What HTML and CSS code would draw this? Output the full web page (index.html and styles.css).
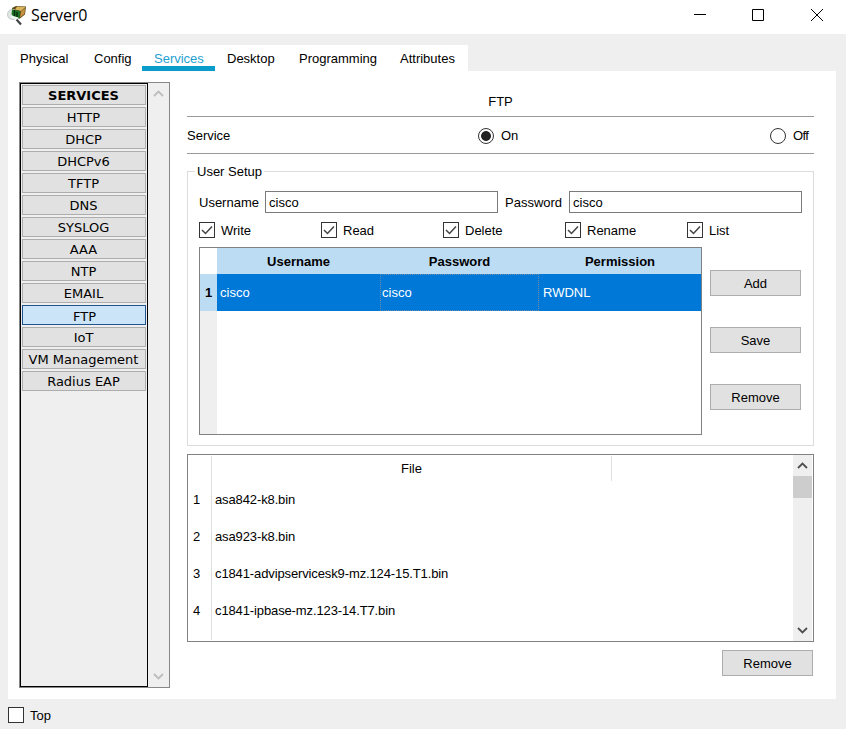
FILE: index.html
```html
<!DOCTYPE html>
<html lang="en">
<head>
<meta charset="utf-8">
<title>Server0</title>
<link rel="stylesheet" href="styles.css">
</head>
<body>
<header class="titlebar">
  <svg class="app-icon" width="20" height="22" viewBox="0 0 20 22">
    <path d="M5 3l4-2 10 .5-1 8-5 4-7-1z" fill="#5b4718"/>
    <path d="M10 1.500l8.500.5-4.500 4-6-1.500z" fill="#d9b45c"/>
    <path d="M14 6.500l4-3.500-.5 6L13 12.500z" fill="#c49340"/>
    <circle cx="5.500" cy="9.500" r="5" fill="#dfe5e2" stroke="#c3c9c6"/>
    <path d="M5 4.500l8 1.500-.5 7.500-5-1-3-3z" fill="#1d7426"/>
    <path d="M7.500 5v6M10 7v5" stroke="#082c0b" stroke-width="1.400"/>
    <path d="M4 11.500l7 2" stroke="#f3f7f5" stroke-width="2"/>
    <path d="M9.500 14.500l4.500 5" stroke="#444" stroke-width="2.200"/>
  </svg>
  <h1>Server0</h1>
  <svg class="controls" width="130" height="14" viewBox="0 0 130 14" fill="none" stroke="#000">
    <path d="M0 6.500h12M58.500 1.500h11v11h-11zM117 1l12 12M129 1l-12 12"/>
  </svg>
</header>
<nav class="tabs">
  <a class="tab t1">Physical</a><a class="tab t2">Config</a><a class="tab t3 active">Services</a><a class="tab t4">Desktop</a><a class="tab t5">Programming</a><a class="tab t6">Attributes</a>
</nav>
<main class="panel">
  <aside class="sidebar">
    <div class="services">
      <div class="service heading">SERVICES</div>
      <div class="service">HTTP</div>
      <div class="service">DHCP</div>
      <div class="service">DHCPv6</div>
      <div class="service">TFTP</div>
      <div class="service">DNS</div>
      <div class="service">SYSLOG</div>
      <div class="service">AAA</div>
      <div class="service">NTP</div>
      <div class="service">EMAIL</div>
      <div class="service selected">FTP</div>
      <div class="service">IoT</div>
      <div class="service">VM Management</div>
      <div class="service">Radius EAP</div>
    </div>
    <div class="scrollbar disabled">
      <svg width="11" height="7" viewBox="0 0 11 7"><path d="M1 6l4.500-4.500L10 6"/></svg>
      <svg width="11" height="7" viewBox="0 0 11 7"><path d="M1 1l4.500 4.500L10 1"/></svg>
    </div>
  </aside>
  <section class="content">
    <h2>FTP</h2>
    <div class="service-state">
      <span class="state-label">Service</span>
      <span class="option on"><i class="radio checked"></i>On</span>
      <span class="option off"><i class="radio"></i><span class="off-text">Off</span></span>
    </div>
    <fieldset class="setup">
      <legend>User Setup</legend>
      <div class="credentials">
        <span class="user-label">Username</span><div class="input">cisco</div>
        <span class="pass-label">Password</span><div class="input">cisco</div>
      </div>
      <div class="permissions">
        <span class="check"><svg class="box" viewBox="0 0 14 14"><path d="M2 7l3.500 3.500L12 3.500"/></svg>Write</span>
        <span class="check"><svg class="box" viewBox="0 0 14 14"><path d="M2 7l3.500 3.500L12 3.500"/></svg>Read</span>
        <span class="check"><svg class="box" viewBox="0 0 14 14"><path d="M2 7l3.500 3.500L12 3.500"/></svg>Delete</span>
        <span class="check"><svg class="box" viewBox="0 0 14 14"><path d="M2 7l3.500 3.500L12 3.500"/></svg>Rename</span>
        <span class="check"><svg class="box" viewBox="0 0 14 14"><path d="M2 7l3.500 3.500L12 3.500"/></svg>List</span>
      </div>
      <div class="user-area">
        <div class="users">
          <div class="corner"></div><div class="th">Username</div><div class="th">Password</div><div class="th">Permission</div>
          <div class="row-no">1</div><div class="td">cisco</div><div class="td focus">cisco</div><div class="td last">RWDNL</div>
          <div class="gutter"></div>
        </div>
        <div class="actions">
          <div class="button">Add</div><div class="button">Save</div><div class="button">Remove</div>
        </div>
      </div>
    </fieldset>
    <div class="files">
      <div class="file-table">
        <div class="num"></div><div class="file-head">File</div>
        <div class="num">1</div><div class="file">asa842-k8.bin</div>
        <div class="num">2</div><div class="file">asa923-k8.bin</div>
        <div class="num">3</div><div class="file">c1841-advipservicesk9-mz.124-15.T1.bin</div>
        <div class="num">4</div><div class="file">c1841-ipbase-mz.123-14.T7.bin</div>
        <div class="num"></div>
      </div>
      <div class="scrollbar narrow">
        <svg width="11" height="7" viewBox="0 0 11 7"><path d="M1 6l4.500-4.500L10 6"/></svg>
        <div class="thumb"></div>
        <svg width="11" height="7" viewBox="0 0 11 7"><path d="M1 1l4.500 4.500L10 1"/></svg>
      </div>
    </div>
    <div class="button remove">Remove</div>
  </section>
</main>
<footer><i class="top-box"></i><span>Top</span></footer>
</body>
</html>
```
FILE: styles.css
```css
* { box-sizing: border-box; }
body {
  margin: 0;
  width: 846px;
  height: 729px;
  overflow: hidden;
  background: #efefef;
  color: #000;
  font: 13px/16px "Liberation Sans", Arial, sans-serif;
  white-space: nowrap;
}
.titlebar {
  display: flex;
  height: 34px;
  padding-left: 7px;
  background: #fff;
}
.app-icon { margin-top: 5px; }
h1 {
  margin: 5px 0 0 4px;
  font: 16px/20px "Open Sans", "Noto Sans", sans-serif;
  letter-spacing: -.1px;
}
.controls { margin: 8px 22px 0 auto; }
.tabs {
  display: flex;
  width: 460px;
  height: 26px;
  margin: 11px 0 0 8px;
  background: #fff;
}
.tab { padding: 6px 0 0 12px; }
.t1 { width: 74px; }
.t2 { width: 60px; }
.t3 { width: 73px; }
.t4 { width: 72px; }
.t5 { width: 101px; }
.t6 { width: 80px; }
.tab.active { color: #259fd0; border-bottom: 5px solid #0a9dcc; }
.panel {
  display: flex;
  width: 828px;
  height: 628px;
  margin-left: 8px;
  padding: 11px 22px 0 11px;
  background: #fff;
}
.sidebar {
  display: flex;
  width: 151px;
  height: 606px;
  border: 1px solid #878787;
  background: #efefef;
}
.services {
  display: flex;
  flex-direction: column;
  gap: 2px;
  width: 128px;
  padding: 1px 1px 0;
  border: 1px solid #000;
  font: 13px/19px "DejaVu Sans", Verdana, sans-serif;
  text-align: center;
}
.service {
  height: 20px;
  padding-right: 1px;
  border: 1px solid #adadad;
  background: #e1e1e1;
}
.service.heading { font-weight: bold; }
.service.selected {
  border-color: #20558d;
  background: #cce4f7;
  padding: 0 0 0 1px;
  line-height: 21px;
}
.scrollbar {
  display: flex;
  flex-direction: column;
  align-items: center;
  width: 20px;
  padding: 7px 0 7px;
  background: #efefef;
}
.scrollbar.narrow { width: 19px; }
.scrollbar svg { flex: none; }
.scrollbar svg:last-child { margin-top: auto; }
.scrollbar path { fill: none; stroke: #505050; stroke-width: 1.8; }
.scrollbar.disabled path { stroke: #bdbdbd; }
.content { width: 627px; margin-left: 17px; }
h2 {
  height: 34px;
  margin: 0;
  padding-top: 11px;
  font: inherit;
  line-height: 17px;
  text-align: center;
}
.service-state {
  display: flex;
  align-items: center;
  height: 38px;
  padding-top: 2px;
  border: solid #9a9a9a;
  border-width: 1px 0;
  margin-bottom: 10px;
}
.state-label { width: 291px; }
.option { display: flex; align-items: center; gap: 7px; }
.on { width: 292px; }
.off-text { letter-spacing: -.6px; }
.radio {
  width: 16px;
  height: 16px;
  border: 1px solid #333;
  border-radius: 50%;
}
.radio.checked { background: radial-gradient(circle, #222 0 4.500px, #fff 5.300px); }
.setup {
  min-width: 0;
  height: 282px;
  margin: 0;
  padding: 13px 11px 0;
  border: 1px solid #dcdcdc;
}
legend {
  height: 14px;
  margin-left: -4px;
  padding: 0 2px;
  line-height: 16px;
}
.credentials { display: flex; align-items: center; height: 22px; }
.credentials span { padding-top: 1px; }
.user-label { width: 66px; }
.pass-label { width: 64px; margin-left: 7px; }
.input {
  width: 233px;
  height: 22px;
  padding: 3px;
  border: 1px solid #7a7a7a;
  line-height: 15px;
}
.permissions { display: flex; height: 16px; margin-top: 9px; }
.check { display: flex; gap: 6px; width: 122px; flex: none; line-height: 17px; }
.check:last-child { width: 60px; }
.box { width: 16px; height: 16px; border: 1px solid #333; }
.box path { fill: none; stroke: #444; stroke-width: 1.5; }
.user-area { display: flex; gap: 8px; margin-top: 9px; }
.users {
  display: grid;
  grid-template: 26px 37px 1fr / 17px 163px 159px 1fr;
  width: 503px;
  height: 188px;
  border: 1px solid #7f8284;
}
.th { background: #bcdcf4; font-weight: bold; line-height: 27px; text-align: center; }
.row-no { background: #bcdcf4; font-weight: bold; line-height: 38px; text-align: center; }
.td { padding-left: 3px; background: #0078d7; color: #fff; line-height: 37px; }
.td.focus { padding-left: 1px; border: 1px dotted #688cab; line-height: 35px; }
.td.last { padding-left: 4px; }
.gutter { background: #efefef; }
.actions { display: flex; flex-direction: column; gap: 31px; padding-top: 23px; }
.button {
  width: 91px;
  height: 26px;
  border: 1px solid #adadad;
  background: #e1e1e1;
  line-height: 25px;
  text-align: center;
}
.files {
  display: flex;
  justify-content: space-between;
  height: 188px;
  margin-top: 8px;
  padding-right: 1px;
  border: 1px solid #828282;
}
.file-table {
  display: grid;
  grid-template-columns: 24px 400px;
  grid-template-rows: 25px repeat(4, 37px) 11px;
  margin-top: 1px;
}
.num { padding-left: 5px; border-right: 1px solid #dedede; line-height: 37px; }
.file-head { border-right: 1px solid #dedede; line-height: 26px; text-align: center; }
.file { padding-left: 3px; line-height: 37px; letter-spacing: -.12px; }
.thumb { width: 19px; height: 22px; margin-top: 7px; flex: none; background: #cdcdcd; }
.remove { margin: 8px 1px 0 auto; }
footer { display: flex; align-items: flex-start; gap: 6px; padding: 8px 0 0 8px; }
footer span { line-height: 17px; }
.top-box { width: 16px; height: 16px; border: 1px solid #333; background: #fff; }
```
